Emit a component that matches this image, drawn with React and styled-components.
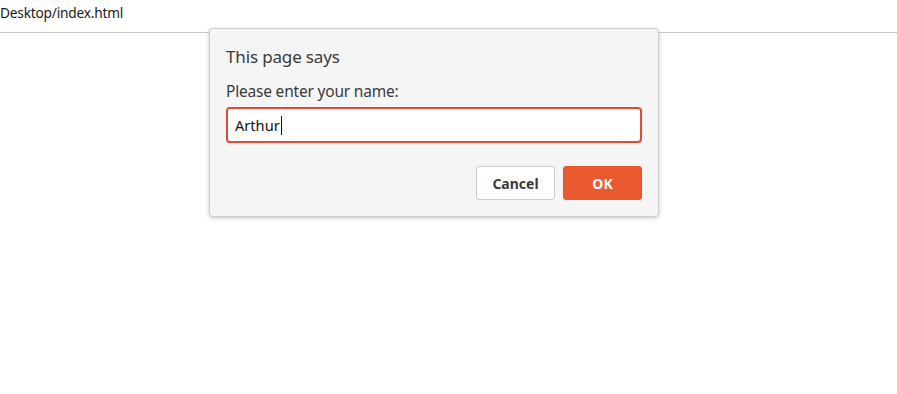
import React from 'react'
import styled, { createGlobalStyle } from 'styled-components'

const GlobalStyle = createGlobalStyle`
  html, body {
    margin: 0;
    padding: 0;
    background: #fff;
    font-family: 'Noto Sans', 'Open Sans', sans-serif;
  }
`

const Page = styled.div`
  position: relative;
  width: 897px;
  height: 394px;
  overflow: hidden;
`

const Location = styled.div`
  height: 33px;
  border-bottom: 1px solid #c8c8c8;
  box-sizing: border-box;
  padding: 3px 0 0 0;
  font-size: 13.7px;
  color: #1a1a1a;
  letter-spacing: -0.2px;
`

const Dialog = styled.div`
  position: absolute;
  left: 209px;
  top: 28px;
  width: 450px;
  box-sizing: border-box;
  padding: 17px 16px 16px 16px;
  background: #f5f5f5;
  border: 1px solid #cfcfcf;
  border-radius: 4px;
  box-shadow: 0 1px 4px rgba(0, 0, 0, 0.22);
  color: #3a3a3a;
`

const Title = styled.div`
  font-size: 17px;
  line-height: 22px;
  margin-bottom: 13px;
  letter-spacing: -0.15px;
`

const Label = styled.div`
  font-size: 15.5px;
  line-height: 20px;
  margin-bottom: 6px;
  letter-spacing: -0.2px;
`

const Field = styled.div`
  display: flex;
  align-items: center;
  height: 36px;
  box-sizing: border-box;
  border: 2px solid #e5483a;
  border-radius: 4px;
  padding: 0 6px 0 7px;
  font-size: 14.6px;
  color: #111;
  background: #fff;
`

const Caret = styled.span`
  display: inline-block;
  width: 1px;
  height: 19px;
  margin-left: 1px;
  background: #111;
`

const Actions = styled.div`
  display: flex;
  justify-content: flex-end;
  gap: 8px;
  margin-top: 23px;
`

const Button = styled.button`
  width: 79px;
  height: 34px;
  box-sizing: border-box;
  border-radius: 3px;
  font-family: inherit;
  font-size: 14px;
  font-weight: 700;
  cursor: pointer;
  border: 1px solid ${p => (p.$primary ? '#e95420' : '#cdcdcd')};
  background: ${p => (p.$primary ? '#e95a30' : '#fff')};
  color: ${p => (p.$primary ? '#fff' : '#3a3a3a')};
`

export default function App() {
  return (
    <Page>
      <GlobalStyle />
      <Location>Desktop/index.html</Location>
      <Dialog>
        <Title>This page says</Title>
        <Label>Please enter your name:</Label>
        <Field>
          Arthur
          <Caret />
        </Field>
        <Actions>
          <Button>Cancel</Button>
          <Button $primary>OK</Button>
        </Actions>
      </Dialog>
    </Page>
  )
}
